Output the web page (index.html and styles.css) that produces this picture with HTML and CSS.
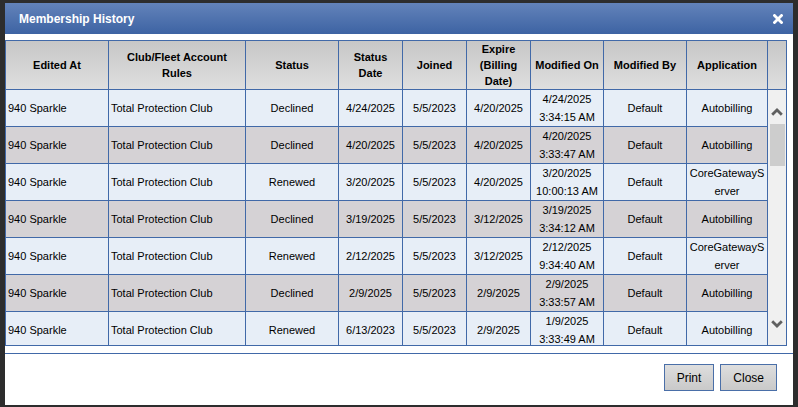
FILE: index.html
```html
<!DOCTYPE html>
<html lang="en">

<head>
    <meta charset="UTF-8">
    <title>Membership History</title>
    <link rel="stylesheet" href="styles.css">
</head>

<body>
    <div class="dialog">
        <div class="titlebar">
            <span class="title">Membership History</span>
            <svg class="close" width="10" height="10" viewBox="0 0 10 10">
                <path d="M1.5 1.5 L8.5 8.5 M8.5 1.5 L1.5 8.5" stroke="#fff" stroke-width="2.8" stroke-linecap="square" />
            </svg>
        </div>

        <div class="grid">
            <div class="row head">
                <div class="cell">Edited At</div>
                <div class="cell">Club/Fleet Account Rules</div>
                <div class="cell">Status</div>
                <div class="cell">Status Date</div>
                <div class="cell">Joined</div>
                <div class="cell">Expire (Billing Date)</div>
                <div class="cell">Modified On</div>
                <div class="cell">Modified By</div>
                <div class="cell">Application</div>
                <div class="cell last"></div>
            </div>

            <div class="body">
                <div class="rows">
                    <div class="row odd">
                        <div class="cell left">940 Sparkle</div>
                        <div class="cell left">Total Protection Club</div>
                        <div class="cell">Declined</div>
                        <div class="cell">4/24/2025</div>
                        <div class="cell">5/5/2023</div>
                        <div class="cell">4/20/2025</div>
                        <div class="cell">4/24/2025<br>3:34:15 AM</div>
                        <div class="cell">Default</div>
                        <div class="cell app">Autobilling</div>
                    </div>
                    <div class="row even">
                        <div class="cell left">940 Sparkle</div>
                        <div class="cell left">Total Protection Club</div>
                        <div class="cell">Declined</div>
                        <div class="cell">4/20/2025</div>
                        <div class="cell">5/5/2023</div>
                        <div class="cell">4/20/2025</div>
                        <div class="cell">4/20/2025<br>3:33:47 AM</div>
                        <div class="cell">Default</div>
                        <div class="cell app">Autobilling</div>
                    </div>
                    <div class="row odd">
                        <div class="cell left">940 Sparkle</div>
                        <div class="cell left">Total Protection Club</div>
                        <div class="cell">Renewed</div>
                        <div class="cell">3/20/2025</div>
                        <div class="cell">5/5/2023</div>
                        <div class="cell">4/20/2025</div>
                        <div class="cell">3/20/2025<br>10:00:13 AM</div>
                        <div class="cell">Default</div>
                        <div class="cell app">CoreGatewayServer</div>
                    </div>
                    <div class="row even">
                        <div class="cell left">940 Sparkle</div>
                        <div class="cell left">Total Protection Club</div>
                        <div class="cell">Declined</div>
                        <div class="cell">3/19/2025</div>
                        <div class="cell">5/5/2023</div>
                        <div class="cell">3/12/2025</div>
                        <div class="cell">3/19/2025<br>3:34:12 AM</div>
                        <div class="cell">Default</div>
                        <div class="cell app">Autobilling</div>
                    </div>
                    <div class="row odd">
                        <div class="cell left">940 Sparkle</div>
                        <div class="cell left">Total Protection Club</div>
                        <div class="cell">Renewed</div>
                        <div class="cell">2/12/2025</div>
                        <div class="cell">5/5/2023</div>
                        <div class="cell">3/12/2025</div>
                        <div class="cell">2/12/2025<br>9:34:40 AM</div>
                        <div class="cell">Default</div>
                        <div class="cell app">CoreGatewayServer</div>
                    </div>
                    <div class="row even">
                        <div class="cell left">940 Sparkle</div>
                        <div class="cell left">Total Protection Club</div>
                        <div class="cell">Declined</div>
                        <div class="cell">2/9/2025</div>
                        <div class="cell">5/5/2023</div>
                        <div class="cell">2/9/2025</div>
                        <div class="cell">2/9/2025<br>3:33:57 AM</div>
                        <div class="cell">Default</div>
                        <div class="cell app">Autobilling</div>
                    </div>
                    <div class="row odd">
                        <div class="cell left">940 Sparkle</div>
                        <div class="cell left">Total Protection Club</div>
                        <div class="cell">Renewed</div>
                        <div class="cell">6/13/2023</div>
                        <div class="cell">5/5/2023</div>
                        <div class="cell">2/9/2025</div>
                        <div class="cell">1/9/2025<br>3:33:49 AM</div>
                        <div class="cell">Default</div>
                        <div class="cell app">Autobilling</div>
                    </div>
                </div>

                <div class="scrollbar">
                    <div class="arrow up">
                        <svg width="12" height="8" viewBox="0 0 12 8">
                            <path d="M1.2 6.8 L6 2 L10.8 6.8" fill="none" stroke="#606060" stroke-width="2.8" />
                        </svg>
                    </div>
                    <div class="track">
                        <div class="thumb"></div>
                    </div>
                    <div class="arrow down">
                        <svg width="12" height="8" viewBox="0 0 12 8">
                            <path d="M1.2 1.2 L6 6 L10.8 1.2" fill="none" stroke="#606060" stroke-width="2.8" />
                        </svg>
                    </div>
                </div>
            </div>
        </div>

        <div class="footer">
            <button type="button" class="btn">Print</button>
            <button type="button" class="btn">Close</button>
        </div>
    </div>
</body>

</html>
```

FILE: styles.css
```css
body {
    font-family: "Liberation Sans", Arial, sans-serif;
    margin: 0;
    padding: 0;
    background-color: #2d2d2d;
    color: #000;
}

/* Dialog window */
.dialog {
    width: 788px;
    height: 402px;
    margin: 3px 0 0 5px;
    background: #fff;
    display: flex;
    flex-direction: column;
}

.titlebar {
    height: 31px;
    display: flex;
    align-items: center;
    justify-content: space-between;
    padding: 0 10px 0 14px;
    background: linear-gradient(#6383ba, #3d63a3);
    box-sizing: border-box;
}

.title {
    color: #fff;
    font-size: 12px;
    font-weight: bold;
}

/* History grid */
.grid {
    width: 782px;
    margin-top: 6px;
    border: 1px solid #4169a8;
    box-sizing: border-box;
}

.row {
    display: grid;
    grid-template-columns: 103px 137px 93px 64px 64px 64px 73px 83px 81px;
    font-size: 11px;
}

.row.head {
    grid-template-columns: 103px 137px 93px 64px 64px 64px 73px 83px 81px 18px;
    background: linear-gradient(#c7c7c7, #dfdfdf);
    font-weight: bold;
    line-height: 16px;
}

.cell {
    display: flex;
    align-items: center;
    justify-content: center;
    text-align: center;
    padding: 0 2px;
    border-right: 1px solid #4169a8;
    border-bottom: 1px solid #4169a8;
    box-sizing: border-box;
}

.head .cell {
    height: 49px;
}

.head .cell.last {
    border-right: none;
}

.cell.left {
    justify-content: flex-start;
    text-align: left;
}

.cell.app {
    word-break: break-all;
}

.body {
    display: flex;
    height: 255px;
}

.rows {
    width: 762px;
    overflow: hidden;
}

.rows .cell {
    height: 37px;
    line-height: 18px;
}

.odd {
    background: #e7eef7;
}

.even {
    background: #d5d2d5;
}

/* Fake scrollbar */
.scrollbar {
    width: 18px;
    display: flex;
    flex-direction: column;
    background: #f0f0f0;
}

.arrow {
    height: 34px;
    display: flex;
    align-items: center;
    justify-content: center;
    box-sizing: border-box;
}

.arrow.up {
    padding-top: 10px;
}

.arrow.down {
    padding-bottom: 9px;
}

.track {
    flex: 1;
    padding-left: 2px;
}

.thumb {
    width: 15px;
    height: 42px;
    background: #cdcdcd;
}

/* Footer buttons */
.footer {
    flex: 1;
    margin-top: 7px;
    border-top: 1px solid #4169a8;
    display: flex;
    justify-content: flex-end;
    align-items: flex-start;
    gap: 6px;
    padding: 10px 16px 0 0;
}

.btn {
    height: 27px;
    padding: 0 12px;
    font-family: "Liberation Sans", Arial, sans-serif;
    font-size: 12px;
    color: #000;
    background: linear-gradient(#dedede, #c9c9c9);
    border: 1px solid #4a6fa8;
    border-radius: 0;
}
```
